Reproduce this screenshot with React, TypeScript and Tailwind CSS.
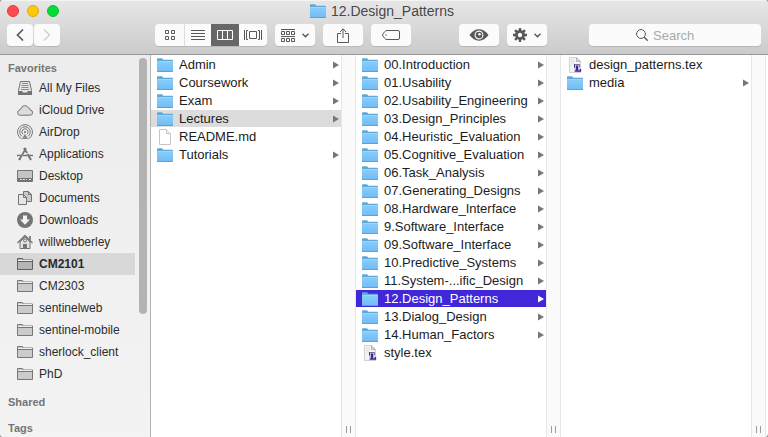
import React from "react";

type FileKind = "folder" | "page" | "tex";
type FileItem = { name: string; kind: FileKind };

const folder = (name: string): FileItem => ({ name, kind: "folder" });

const rootFiles: FileItem[] = [
  folder("Admin"),
  folder("Coursework"),
  folder("Exam"),
  folder("Lectures"),
  { name: "README.md", kind: "page" },
  folder("Tutorials"),
];

const lectures: FileItem[] = [
  folder("00.Introduction"),
  folder("01.Usability"),
  folder("02.Usability_Engineering"),
  folder("03.Design_Principles"),
  folder("04.Heuristic_Evaluation"),
  folder("05.Cognitive_Evaluation"),
  folder("06.Task_Analysis"),
  folder("07.Generating_Designs"),
  folder("08.Hardware_Interface"),
  folder("9.Software_Interface"),
  folder("09.Software_Interface"),
  folder("10.Predictive_Systems"),
  folder("11.System-...ific_Design"),
  folder("12.Design_Patterns"),
  folder("13.Dialog_Design"),
  folder("14.Human_Factors"),
  { name: "style.tex", kind: "tex" },
];

const patterns: FileItem[] = [{ name: "design_patterns.tex", kind: "tex" }, folder("media")];

function BlueFolder() {
  return (
    <svg width="16" height="14" viewBox="0 0 16 14" className="shrink-0" aria-hidden="true">
      <defs>
        <linearGradient id="folderBody" x1="0" y1="0" x2="0" y2="1">
          <stop offset="0" stopColor="#8acdfa" />
          <stop offset="1" stopColor="#6fbdf6" />
        </linearGradient>
      </defs>
      <path d="M0 1.2Q0 .3 .9 .3H5l1.4 1.5H15q1 0 1 1V13.6H0z" fill="#5fa9d8" />
      <path d="M0 3.2H16V13.4H0z" fill="url(#folderBody)" />
      <path d="M0 13h16v1H0z" fill="#5ba3d4" />
      <path d="M.5 3.5h15" stroke="#9bd7fc" />
    </svg>
  );
}

function PageIcon() {
  return (
    <svg width="16" height="16" viewBox="0 0 16 16" className="shrink-0" aria-hidden="true">
      <path d="M2.5.5h7l4 4v11h-11z" fill="#fff" stroke="#c6c6c6" />
      <path d="M9.5.5v4h4" fill="#f2f2f2" stroke="#c6c6c6" />
    </svg>
  );
}

function TexIcon() {
  return (
    <svg width="16" height="16" viewBox="0 0 16 16" className="shrink-0" aria-hidden="true">
      <path d="M2.5.5h7l4 4v11h-11z" fill="#f4f4f4" stroke="#d2d2d2" />
      <path d="M9.5.5v4h4z" fill="#d5d5d5" stroke="#b8b8b8" />
      <path d="M4 3h4M4 5h4M4 7h3" stroke="#dddddd" />
      <path d="M7 7h6.500v8.500H7z" fill="#cfc8e6" />
      <path d="M7 7.500h5.500v2.500" fill="none" stroke="#77738a" />
      <path d="M7.500 7.500v3" stroke="#3f2590" />
      <path d="M10 8.500v5" stroke="#41219c" strokeWidth="2.200" />
      <path d="M8 14h5.500v-2" fill="none" stroke="#3f2590" strokeWidth="1.300" />
    </svg>
  );
}

function FileRow({ item, selected }: { item: FileItem; selected?: "gray" | "blue" }) {
  const tone =
    selected === "blue" ? "bg-[#4027da] text-white" : selected === "gray" ? "bg-[#dcdcdc] text-[#1c1c1c]" : "text-[#1c1c1c]";
  return (
    <li className="pb-px">
      <button type="button" className={`flex h-[17px] w-full items-center gap-1.5 pr-0.5 pl-1.5 text-left text-[13px] leading-[17px] ${tone}`}>
        {item.kind === "folder" ? <BlueFolder /> : item.kind === "page" ? <PageIcon /> : <TexIcon />}
        <span className="flex-1 truncate">{item.name}</span>
        {item.kind === "folder" && (
          <svg width="6" height="8" viewBox="0 0 6 8" className={selected === "blue" ? "text-white" : "text-[#777]"} aria-hidden="true">
            <path d="M0 .5 6 4 0 7.5z" fill="currentColor" />
          </svg>
        )}
      </button>
    </li>
  );
}

function Column({ items, selected, tone, label }: { items: FileItem[]; selected?: string; tone?: "gray" | "blue"; label: string }) {
  return (
    <section aria-label={label} className="flex min-w-0">
      <ul className="min-w-0 flex-1 pt-px">
        {items.map((item) => (
          <FileRow key={item.name} item={item} selected={item.name === selected ? tone : undefined} />
        ))}
      </ul>
      <div className="flex w-[15px] shrink-0 items-end gap-[3px] border-x border-[#e7e7e7] bg-[#fafafa] pb-1 pl-1">
        <span className="h-[7px] w-px bg-[#9c9c9c]" />
        <span className="h-[7px] w-px bg-[#9c9c9c]" />
      </div>
    </section>
  );
}

const sideSvg = { width: 16, height: 16, viewBox: "0 0 16 16", fill: "none", stroke: "#747474", "aria-hidden": true } as const;

function AllFilesIcon() {
  return (
    <svg {...sideSvg}>
      <path d="M3.5 1.5h9l2 9v4h-13v-4z" fill="#e6e6e6" />
      <path d="M5 3.5h6M4.500 5.5h7M4.500 7.5h7M4 9.5h8" stroke="#8a8a8a" />
      <path d="M1 11h4l1 1.500h4l1-1.500h4v4H1z" fill="#747474" stroke="none" />
    </svg>
  );
}
function CloudIcon() {
  return (
    <svg {...sideSvg}>
      <path d="M3.600 13.200h9.200a2.600 2.600 0 0 0 .4-5.200 2 2 0 0 0-2-2.200A3.700 3.700 0 0 0 4.200 6.500 2 2 0 0 0 2.600 8.300a2.500 2.500 0 0 0 1 4.900z" fill="#dcdcdc" />
    </svg>
  );
}
function AirDropIcon() {
  return (
    <svg {...sideSvg}>
      <path d="M4.600 14.800a7.500 7.500 0 1 1 6.800 0" />
      <path d="M5 12.400a5.300 5.300 0 1 1 6 0" />
      <path d="M6 10.300a3.100 3.100 0 1 1 4 0" />
      <circle cx="8" cy="8" r="1.100" fill="#747474" stroke="none" />
      <path d="m8 9.500 3 5.500H5z" fill="#8a8a8a" stroke="none" />
    </svg>
  );
}
function AppsIcon() {
  return (
    <svg {...sideSvg}>
      <path d="M7 2 10 7M10.500 8 14 14" strokeWidth="2" />
      <path d="M9 2 2.500 13.500" strokeWidth="1.600" />
      <path d="M0 9.500h4M6 9.500h4M12 9.500h4" strokeWidth="1.600" />
      <path d="m2 14 1.200-2" strokeWidth="2" />
    </svg>
  );
}
function DesktopIcon() {
  return (
    <svg {...sideSvg}>
      <path d="M.5 2.500h15v11H.5z" fill="#c4c4c4" />
      <path d="M1 10h14v3H1z" fill="#747474" stroke="none" />
      <path d="M3 11.500h2M6 11.500h2M9 11.500h1M12 11.500h2" stroke="#e4e4e4" />
    </svg>
  );
}
function DocumentsIcon() {
  return (
    <svg {...sideSvg}>
      <path d="M6.500 1.500h5l3 3v7h-8z" fill="#c9c9c9" />
      <path d="M11.500 1.500v3h3" />
      <path d="M1.500 4.500h5l3 3v7h-8z" fill="#e6e6e6" />
      <path d="M6.500 4.500v3h3" />
    </svg>
  );
}
function DownloadsIcon() {
  return (
    <svg {...sideSvg}>
      <circle cx="8" cy="8" r="8" fill="#747474" stroke="none" />
      <path d="M6 3.500h4v4h3L8 12.700 3 7.500h3z" fill="#f3f3f3" stroke="none" />
    </svg>
  );
}
function HomeIcon() {
  return (
    <svg {...sideSvg}>
      <path d="M3 8v6.500h10V8L8 3z" fill="#e3e3e3" />
      <path d="m.5 9 7.500-7.500L15.500 9" strokeWidth="1.300" />
      <path d="M13 2v4" strokeWidth="1.700" />
      <circle cx="8" cy="6.500" r="1.500" />
      <path d="M6 10h4v5H6z" fill="#747474" stroke="none" />
    </svg>
  );
}
function GrayFolder({ active }: { active?: boolean }) {
  return (
    <svg {...sideSvg} stroke={active ? "#5f5f5f" : "#777"}>
      <path d="M.5 13.500v-11h5l1 1.500h9v9.500z" fill={active ? "#b5b5b5" : "#cbcbcb"} />
      <path d="M1 4.500h14" stroke="#efefef" />
      <path d="M1 5.500h14" />
    </svg>
  );
}

const favorites: { name: string; icon: React.ReactNode }[] = [
  { name: "All My Files", icon: <AllFilesIcon /> },
  { name: "iCloud Drive", icon: <CloudIcon /> },
  { name: "AirDrop", icon: <AirDropIcon /> },
  { name: "Applications", icon: <AppsIcon /> },
  { name: "Desktop", icon: <DesktopIcon /> },
  { name: "Documents", icon: <DocumentsIcon /> },
  { name: "Downloads", icon: <DownloadsIcon /> },
  { name: "willwebberley", icon: <HomeIcon /> },
  { name: "CM2101", icon: <GrayFolder active /> },
  { name: "CM2303", icon: <GrayFolder /> },
  { name: "sentinelweb", icon: <GrayFolder /> },
  { name: "sentinel-mobile", icon: <GrayFolder /> },
  { name: "sherlock_client", icon: <GrayFolder /> },
  { name: "PhD", icon: <GrayFolder /> },
];

function Sidebar() {
  const heading = "pl-2 text-[11px] font-bold text-[#757575]";
  return (
    <nav aria-label="Sidebar" className="flex w-[151px] shrink-0 border-r border-[#b4b4b4] bg-linear-to-b from-[#ededee] to-[#f3f3f4]">
      <div className="w-[135px] pt-1">
        <h2 className={`leading-[18px] ${heading}`}>Favorites</h2>
        <ul>
          {favorites.map(({ name, icon }) => (
            <li key={name}>
              <button
                type="button"
                className={`flex h-[22px] w-full items-center gap-1.5 pl-[17px] text-left text-xs ${
                  name === "CM2101" ? "bg-[#d8d8d9] font-bold text-[#2a2a2a]" : "text-[#2c2c2c]"
                }`}
              >
                {icon}
                <span>{name}</span>
              </button>
            </li>
          ))}
        </ul>
        <h2 className={`mt-2 leading-[18px] ${heading}`}>Shared</h2>
        <h2 className={`mt-2 leading-[18px] ${heading}`}>Tags</h2>
      </div>
      <div className="mt-[3px] ml-1 h-64 w-2 rounded-full bg-[#b3b3b3]" />
    </nav>
  );
}

function Tool({ label, className, children }: { label: string; className: string; children: React.ReactNode }) {
  return (
    <button type="button" aria-label={label} className={`flex h-[22px] shrink-0 items-center justify-center ${className}`}>
      {children}
    </button>
  );
}

const plain = "rounded bg-[#fbfbfb] shadow-[0_1px_0_#b9b9b9]";
const toolSvg = { fill: "none", stroke: "#585858", "aria-hidden": true } as const;

function DownChevron() {
  return (
    <svg width="7" height="5" viewBox="0 0 7 5" {...toolSvg}>
      <path d="m.5.800 3 2.900 3-2.900" strokeWidth="1.500" />
    </svg>
  );
}

function Toolbar() {
  return (
    <div className="mt-0.5 flex gap-2 px-[7px] pb-2">
      <div className="mr-[87px] flex gap-px">
        <Tool label="Back" className={`w-[26px] ${plain}`}>
          <svg width="8" height="14" viewBox="0 0 8 14" {...toolSvg}>
            <path d="M7 1.500 1.500 7 7 12.500" strokeWidth="1.700" />
          </svg>
        </Tool>
        <Tool label="Forward" className={`w-[26px] ${plain}`}>
          <svg width="8" height="14" viewBox="0 0 8 14" {...toolSvg} stroke="#cfcfcf">
            <path d="M1 1.500 6.500 7 1 12.500" strokeWidth="1.400" />
          </svg>
        </Tool>
      </div>
      <div className={`flex ${plain}`}>
        <Tool label="Icon view" className="w-[30px] border-r border-[#dcdcdc]">
          <svg width="10" height="10" viewBox="0 0 10 10" {...toolSvg}>
            <path d="M.5.500h3v3h-3zM6.500.500h3v3h-3zM.5 6.500h3v3h-3zM6.500 6.500h3v3h-3z" />
          </svg>
        </Tool>
        <Tool label="List view" className="w-[26px]">
          <svg width="14" height="10" viewBox="0 0 14 10" {...toolSvg}>
            <path d="M0 .5h14M0 3.500h14M0 6.500h14M0 9.500h14" />
          </svg>
        </Tool>
        <Tool label="Column view" className="w-7 bg-[#676767]">
          <svg width="16" height="10" viewBox="0 0 16 10" {...toolSvg} stroke="#fff">
            <path d="M.5.500h15v9H.5zM5.500.500v9M10.500.500v9" />
          </svg>
        </Tool>
        <Tool label="Cover Flow view" className="w-7">
          <svg width="18" height="10" viewBox="0 0 18 10" {...toolSvg}>
            <path d="M5.500 1.500h7v7h-7zM.5 0v10M17.500 0v10M4 .5H2.500v9H4M14 .5h1.500v9H14" />
          </svg>
        </Tool>
      </div>
      <Tool label="Arrange items" className={`w-10 gap-[7px] ${plain}`}>
        <svg width="14" height="13" viewBox="0 0 14 13" {...toolSvg}>
          <path d="M0 .5h14M0 7.500h14M.5 2.500h3v3h-3zM5.500 2.500h3v3h-3zM10.500 2.500h3v3h-3zM.5 9.500h3v3h-3zM5.500 9.500h3v3h-3zM10.500 9.500h3v3h-3z" />
        </svg>
        <DownChevron />
      </Tool>
      <Tool label="Share" className={`w-10 ${plain}`}>
        <svg width="12" height="15" viewBox="0 0 12 15" {...toolSvg}>
          <path d="M4 5.500H.5v9h11v-9H8M6 10V1M3 4l3-3.200L9 4" />
        </svg>
      </Tool>
      <Tool label="Edit tags" className={`mr-10 w-10 ${plain}`}>
        <svg width="18" height="10" viewBox="0 0 18 10" {...toolSvg}>
          <path d="M5 .500h11q1.500 0 1.500 1.500v6q0 1.500-1.500 1.500H5Q3.800 9.500 3 8.600L.9 6Q.2 5 .9 4L3 1.400Q3.800.500 5 .500z" />
          <circle cx="4" cy="5" r=".7" fill="#585858" stroke="none" />
        </svg>
      </Tool>
      <Tool label="Quick Look" className={`w-10 ${plain}`}>
        <svg width="20" height="12" viewBox="0 0 20 12" {...toolSvg}>
          <path d="M.5 6Q4.500.300 10 .300T19.500 6Q15.500 11.700 10 11.700T.5 6z" fill="#585858" stroke="none" />
          <circle cx="10" cy="6" r="3.900" fill="#585858" stroke="#fbfbfb" strokeWidth="1.100" />
          <circle cx="10.500" cy="5.300" r="1.300" fill="#fbfbfb" stroke="none" />
        </svg>
      </Tool>
      <Tool label="Actions" className={`mr-[34px] w-10 gap-[7px] ${plain}`}>
        <svg width="14" height="14" viewBox="0 0 14 14" {...toolSvg}>
          <path d="M7 0v14M0 7h14M2.050 2.050l9.900 9.900M11.950 2.050l-9.900 9.900" strokeWidth="2.400" />
          <circle cx="7" cy="7" r="3.600" fill="#fbfbfb" strokeWidth="2.800" />
        </svg>
        <DownChevron />
      </Tool>
      <label className={`flex h-[22px] min-w-0 flex-1 items-center justify-center gap-[5px] ${plain}`}>
        <svg width="12" height="12" viewBox="0 0 12 12" {...toolSvg}>
          <circle cx="5" cy="5" r="4.400" />
          <path d="m8.200 8.200 3.500 3.500" strokeWidth="1.300" />
        </svg>
        <input
          type="search"
          aria-label="Search"
          placeholder="Search"
          className="h-5 w-[61px] bg-transparent text-[13px] text-[#333] outline-none placeholder:text-[#a9a9a9]"
        />
      </label>
    </div>
  );
}

function TitleBar() {
  return (
    <header className="shrink-0 border-b border-[#979797] bg-linear-to-b from-[#e8e7e8] to-[#cccbcc] shadow-[inset_0_1px_0_#f3f3f3]">
      <div className="grid h-[22px] grid-cols-[1fr_auto_1fr] items-center pr-[11px] pl-[7px]">
        <div className="flex gap-2">
          <button type="button" aria-label="Close" className="size-3 rounded-full border border-[#e2383f] bg-[#ff4a50]" />
          <button type="button" aria-label="Minimize" className="size-3 rounded-full border border-[#dfa80b] bg-[#fdc90a]" />
          <button type="button" aria-label="Zoom" className="size-3 rounded-full border border-[#14bd2e] bg-[#05dc35]" />
        </div>
        <div className="flex items-center gap-[5px]">
          <BlueFolder />
          <h1 className="text-sm text-[#484848]">12.Design_Patterns</h1>
        </div>
      </div>
      <Toolbar />
    </header>
  );
}

export default function App() {
  return (
    <div className="h-screen bg-[#9b9b9b] font-['Liberation_Sans',Arial,sans-serif]">
      <div className="flex h-full flex-col overflow-hidden rounded-[4px] bg-white">
        <TitleBar />
        <div className="flex min-h-0 flex-1 overflow-hidden">
          <Sidebar />
          <main className="grid min-w-0 flex-1 grid-cols-3 pr-0.5">
            <Column label="CM2101" items={rootFiles} selected="Lectures" tone="gray" />
            <Column label="Lectures" items={lectures} selected="12.Design_Patterns" tone="blue" />
            <Column label="12.Design_Patterns" items={patterns} />
          </main>
        </div>
      </div>
    </div>
  );
}
